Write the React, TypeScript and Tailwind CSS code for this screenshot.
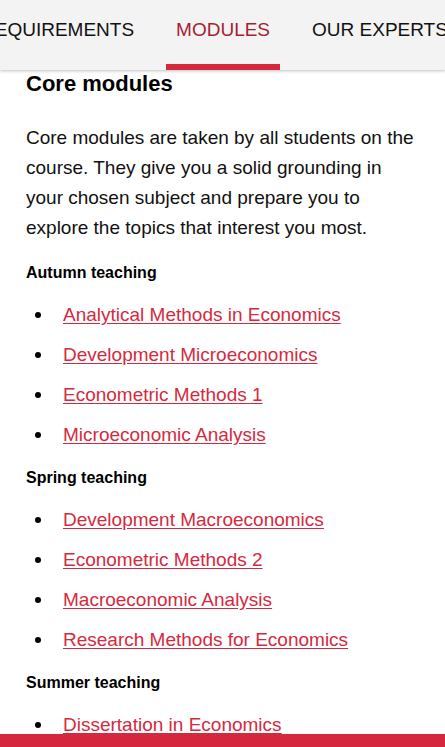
import React from 'react';

const TABS = ['REQUIREMENTS', 'MODULES', 'OUR EXPERTS'];

const GROUPS = [
  {
    title: 'Autumn teaching',
    items: ['Analytical Methods in Economics', 'Development Microeconomics', 'Econometric Methods 1', 'Microeconomic Analysis'],
  },
  {
    title: 'Spring teaching',
    items: ['Development Macroeconomics', 'Econometric Methods 2', 'Macroeconomic Analysis', 'Research Methods for Economics'],
  },
  {
    title: 'Summer teaching',
    items: ['Dissertation in Economics'],
  },
];

export default function App() {
  return (
    <div className="h-screen flex flex-col bg-white overflow-hidden" style={{ fontFamily: '"Liberation Sans", Arial, sans-serif' }}>
      {/* Tab bar */}
      <div className="h-[70px] shrink-0 bg-[#f3f3f3] shadow-[0_1px_3px_rgba(0,0,0,0.25)] relative z-10 overflow-hidden">
        <div className="flex h-full -ml-[29px] gap-[22px] whitespace-nowrap">
          {TABS.map((tab) => {
            const active = tab === 'MODULES';
            return (
              <div key={tab} className="relative h-full px-[10px] flex items-start pt-[19px] shrink-0">
                <span className={`text-[19px] leading-[22px] ${active ? 'text-[#a51f35]' : 'text-[#111]'}`}>{tab}</span>
                {active && <div className="absolute left-0 right-0 bottom-0 h-[6px] bg-[#d5283e]" />}
              </div>
            );
          })}
        </div>
      </div>

      {/* Content */}
      <div className="flex-1 overflow-hidden px-[26px] text-black">
        <h2 className="text-[22px] font-bold leading-[26px] mt-[1px]">Core modules</h2>
        <p className="text-[19px] leading-[30px] mt-[26px] text-[#111]">
          Core modules are taken by all students on the course. They give you a solid grounding in your chosen subject and prepare you to explore the topics that interest you most.
        </p>

        {GROUPS.map((g, i) => (
          <div key={g.title} className={i === 0 ? 'mt-[20px]' : 'mt-[13px]'}>
            <h3 className="text-[16px] font-bold leading-[20px]">{g.title}</h3>
            <ul className="mt-[12px]">
              {g.items.map((item) => (
                <li key={item} className="flex items-center h-[40px]">
                  <span className="w-[6px] h-[6px] rounded-full bg-black ml-[9px] mr-[22px] shrink-0" />
                  <a href="#" className="text-[19px] leading-[22px] text-[#d42a40] underline underline-offset-[2px]">
                    {item}
                  </a>
                </li>
              ))}
            </ul>
          </div>
        ))}
      </div>

      {/* Bottom bar */}
      <div className="h-[13px] shrink-0 bg-[#d5283e]" />
    </div>
  );
}
